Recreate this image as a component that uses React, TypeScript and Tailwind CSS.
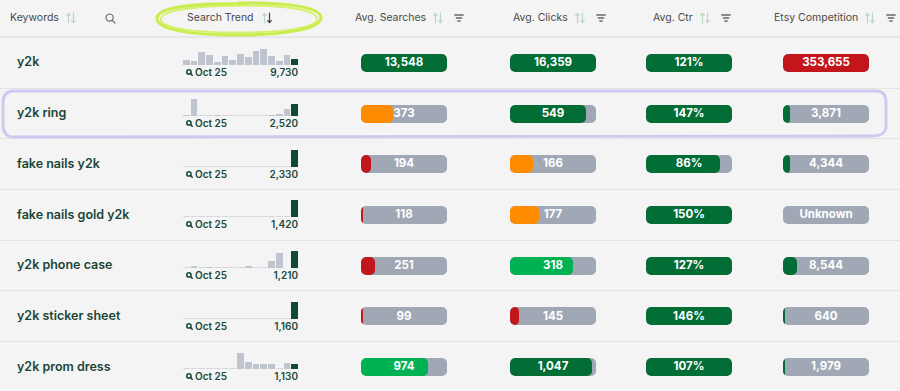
import React from "react";

const FONT = { fontFamily: "Inter, 'Noto Sans', sans-serif" };

function SortIcon({ active = false }: { active?: boolean }) {
  const light = "#bcd5c4";
  return (
    <svg width="10" height="12" viewBox="0 0 10 12" fill="none" strokeWidth="1.2" strokeLinecap="round" strokeLinejoin="round">
      <path d="M2.5 11V1.5M0.7 3.3L2.5 1.5L4.3 3.3" stroke={light} />
      <path d="M7.5 1V10.5M5.7 8.7L7.5 10.5L9.3 8.7" stroke={active ? "#444" : light} />
    </svg>
  );
}

function FilterIcon() {
  return (
    <svg width="10" height="10" viewBox="0 0 10 10" fill="none" stroke="#666" strokeWidth="1.3" strokeLinecap="round">
      <path d="M0.8 2H9.2M2.3 5H7.7M3.8 8H6.2" />
    </svg>
  );
}

function SearchIcon() {
  return (
    <svg width="11" height="11" viewBox="0 0 11 11" fill="none" stroke="#6b6b6b" strokeWidth="1.2" strokeLinecap="round">
      <circle cx="4.6" cy="4.6" r="3.6" />
      <path d="M7.3 7.3L10 10" />
    </svg>
  );
}

function MiniSearch() {
  return (
    <svg width="7" height="7" viewBox="0 0 7 7" fill="none" stroke="#1a4a3a" strokeWidth="1.6" strokeLinecap="round">
      <circle cx="2.9" cy="2.9" r="2.1" />
      <path d="M4.6 4.6L6.2 6.2" />
    </svg>
  );
}

type Pill = { v: string; fill: number; c: string };

const G = "#036d36";
const R = "#c3161c";
const O = "#ff8c00";
const BG = "#00b253";

type Row = {
  k: string;
  total: string;
  bars: number[];
  s: Pill;
  cl: Pill;
  ctr: Pill;
  e: Pill;
};

const flat = (last: number) => [...Array(14).fill(1), last];

const rows: Row[] = [
  {
    k: "y2k",
    total: "9,730",
    bars: [5.7, 4.7, 13, 10.7, 3, 9.7, 5.7, 11.3, 8, 14, 16.7, 9.7, 4, 10, 6.7],
    s: { v: "13,548", fill: 86, c: G },
    cl: { v: "16,359", fill: 86, c: G },
    ctr: { v: "121%", fill: 86, c: G },
    e: { v: "353,655", fill: 86, c: R },
  },
  {
    k: "y2k ring",
    total: "2,520",
    bars: [1.5, 16.7, 1, 1, 1.5, 1, 1, 1, 1, 1, 1, 1.3, 1.7, 6.7, 12.3],
    s: { v: "373", fill: 32, c: O },
    cl: { v: "549", fill: 76, c: G },
    ctr: { v: "147%", fill: 86, c: G },
    e: { v: "3,871", fill: 7, c: G },
  },
  {
    k: "fake nails y2k",
    total: "2,330",
    bars: flat(17),
    s: { v: "194", fill: 10, c: R },
    cl: { v: "166", fill: 23, c: O },
    ctr: { v: "86%", fill: 74, c: G },
    e: { v: "4,344", fill: 7, c: G },
  },
  {
    k: "fake nails gold y2k",
    total: "1,420",
    bars: flat(17),
    s: { v: "118", fill: 1.5, c: R },
    cl: { v: "177", fill: 29, c: O },
    ctr: { v: "150%", fill: 86, c: G },
    e: { v: "Unknown", fill: 0, c: G },
  },
  {
    k: "y2k phone case",
    total: "1,210",
    bars: [1, 1.7, 1, 1.3, 1, 1, 1, 1, 2, 1, 1, 7, 15.3, 0, 17.3],
    s: { v: "251", fill: 14, c: R },
    cl: { v: "318", fill: 63, c: BG },
    ctr: { v: "127%", fill: 86, c: G },
    e: { v: "8,544", fill: 14, c: G },
  },
  {
    k: "y2k sticker sheet",
    total: "1,160",
    bars: flat(17),
    s: { v: "99", fill: 1.5, c: R },
    cl: { v: "145", fill: 8.5, c: R },
    ctr: { v: "146%", fill: 86, c: G },
    e: { v: "640", fill: 1.5, c: G },
  },
  {
    k: "y2k prom dress",
    total: "1,130",
    bars: [1, 1, 1, 1, 1, 1, 1, 16.7, 7.3, 5, 5, 5, 1, 6, 5],
    s: { v: "974", fill: 67, c: BG },
    cl: { v: "1,047", fill: 82, c: G },
    ctr: { v: "107%", fill: 86, c: G },
    e: { v: "1,979", fill: 2, c: G },
  },
];

function PillBar({ p }: { p: Pill }) {
  return (
    <div className="relative w-[86px] h-[18px] rounded-[5px] bg-[#a0a8b5] overflow-hidden">
      {p.fill > 0 && (
        <div
          className="absolute left-0 top-0 bottom-0 rounded-[5px]"
          style={{ width: `${p.fill}px`, backgroundColor: p.c }}
        />
      )}
      <div className="absolute inset-0 flex items-center justify-center text-white font-bold text-[11.5px] leading-none">
        {p.v}
      </div>
    </div>
  );
}

function Trend({ bars, total }: { bars: number[]; total: string }) {
  return (
    <div className="w-[115px] flex flex-col">
      <div className="h-[18px] flex items-end gap-px">
        {bars.map((h, i) => (
          <div
            key={i}
            className={i === bars.length - 1 ? "flex-1 bg-[#0e4a35]" : h <= 1.05 ? "flex-1 bg-[#d3d7dd]" : "flex-1 bg-[#bfc5ce]"}
            style={{ height: `${h}px` }}
          />
        ))}
      </div>
      <div className="mt-[2px] flex items-center justify-between text-[10px] font-semibold leading-[11px] text-[#1a4a3a]">
        <div className="flex items-center gap-[2px] pl-[3px]">
          <MiniSearch />
          <span>Oct 25</span>
        </div>
        <span>{total}</span>
      </div>
    </div>
  );
}

export default function App() {
  const cols = "grid grid-cols-[170px_160px_150px_150px_130px_140px]";
  return (
    <div className="relative w-[900px] h-[391px] overflow-hidden bg-[#f4f4f4]" style={FONT}>
      {/* header */}
      <div className={`${cols} h-[38px] border-b-2 border-[#e6e7ea] text-[10.5px] text-[#4a4a4a] whitespace-nowrap`}>
        <div className="flex items-center pl-[10px]">
          <span>Keywords</span>
          <span className="ml-[7px] flex"><SortIcon /></span>
          <span className="ml-[29px] flex"><SearchIcon /></span>
        </div>
        <div className="flex items-center pl-[17px]">
          <span>Search Trend</span>
          <span className="ml-[8px] flex"><SortIcon active /></span>
        </div>
        <div className="flex items-center pl-[25px]">
          <span>Avg. Searches</span>
          <span className="ml-[7px] flex"><SortIcon /></span>
          <span className="ml-[11px] flex"><FilterIcon /></span>
        </div>
        <div className="flex items-center pl-[33px]">
          <span>Avg. Clicks</span>
          <span className="ml-[7px] flex"><SortIcon /></span>
          <span className="ml-[11px] flex"><FilterIcon /></span>
        </div>
        <div className="flex items-center pl-[23px]">
          <span>Avg. Ctr</span>
          <span className="ml-[7px] flex"><SortIcon /></span>
          <span className="ml-[11px] flex"><FilterIcon /></span>
        </div>
        <div className="flex items-center pl-[14px]">
          <span>Etsy Competition</span>
          <span className="ml-[7px] flex"><SortIcon /></span>
          <span className="ml-[11px] flex"><FilterIcon /></span>
        </div>
      </div>

      {/* rows */}
      {rows.map((r) => (
        <div key={r.k} className={`${cols} h-[50.7px] border-b border-[#e3e3e6]`}>
          <div className="flex items-center pl-[17px] text-[12.5px] font-semibold text-[#1a4536] whitespace-nowrap">{r.k}</div>
          <div className="flex items-center pl-[13px]">
            <Trend bars={r.bars} total={r.total} />
          </div>
          <div className="flex items-center pl-[31px]"><PillBar p={r.s} /></div>
          <div className="flex items-center pl-[30px]"><PillBar p={r.cl} /></div>
          <div className="flex items-center pl-[16px]"><PillBar p={r.ctr} /></div>
          <div className="flex items-center pl-[23px]"><PillBar p={r.e} /></div>
        </div>
      ))}

      {/* annotations */}
      <svg className="absolute left-0 top-0 pointer-events-none" width="900" height="391" viewBox="0 0 900 391" fill="none">
        <path
          d="M238 3 C290 2 322 8 321 18 C320 29 285 35 236 35 C188 35 156 29 157 18 C158 8 190 3 245 4"
          stroke="#c4ec3a"
          strokeWidth="3"
          strokeLinecap="round"
          opacity="0.9"
        />
        <path
          d="M232 5.5 C284 4.5 318 10 317 19 C316 28 282 32.5 238 32.5 C192 32.5 160 28 161 19 C162 10 196 6 240 5.5"
          stroke="#cdf048"
          strokeWidth="2"
          strokeLinecap="round"
          opacity="0.8"
        />
        <path
          d="M14 91 L876 91 C884 91 886 96 886 102 L886 126 C886 133 880 136 872 136 L14 137 C6 137 3 132 3 125 L3 103 C3 95 7 91 14 91 Z"
          stroke="#cbc3ee"
          strokeWidth="2.8"
          opacity="0.9"
        />
      </svg>
    </div>
  );
}
